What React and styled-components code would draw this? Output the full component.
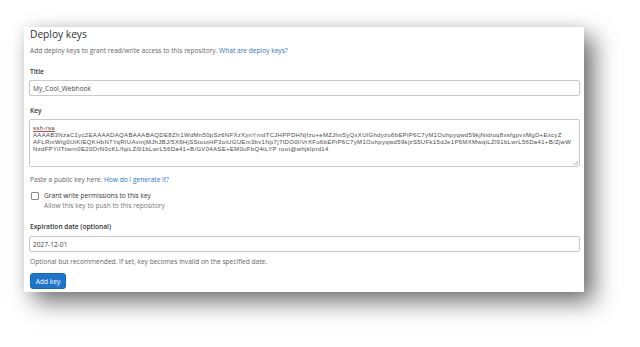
import React from 'react'
import styled, { createGlobalStyle } from 'styled-components'

const GlobalStyle = createGlobalStyle`
  html, body {
    margin: 0;
    padding: 0;
    background: #fff;
  }
  body {
    font-family: "Open Sans", "Noto Sans", sans-serif;
    color: #333;
  }
`

const Page = styled.div`
  width: 640px;
  height: 347px;
  box-sizing: border-box;
  padding: 27px 0 0 24px;
  overflow: hidden;
`

const Card = styled.section`
  width: 560px;
  box-sizing: border-box;
  background: #fff;
  padding: 1px 4px 3px 5px;
  box-shadow: 10px 10px 22px rgba(0, 0, 0, 0.55), 0 0 12px rgba(0, 0, 0, 0.08);
`

const Heading = styled.h2`
  margin: 0 0 0 1px;
  font-size: 10.2px;
  font-weight: 400;
  line-height: 12px;
  color: #303030;
`

const Help = styled.p`
  margin: ${p => p.$top || 0}px 0 0 1px;
  font-size: 6.6px;
  line-height: 9px;
  color: #666;
`

const A = styled.a`
  color: #1f75cb;
  text-decoration: none;
`

const Label = styled.label`
  display: block;
  margin: ${p => p.$top}px 0 ${p => p.$bottom || 4}px 1px;
  font-size: 6.6px;
  font-weight: 600;
  line-height: 9px;
  color: #333;
`

const Input = styled.input`
  display: block;
  width: 551px;
  height: 16px;
  box-sizing: border-box;
  border: 1px solid #c9c9c9;
  border-radius: 2px;
  padding: 0 3px;
  font-family: inherit;
  font-size: 6.6px;
  color: #444;
  background: #fff;
  outline: none;
`

const KeyBox = styled.div`
  position: relative;
  width: 551px;
  height: 48px;
  box-sizing: border-box;
  border: 1px solid #c9c9c9;
  border-radius: 2px;
  padding: 5px 3px 0 3px;
  font-family: "Liberation Sans", Arial, sans-serif;
  font-size: 6px;
  letter-spacing: 0.32px;
  line-height: 7px;
  color: #4a4a4a;
  white-space: pre;
  overflow: hidden;
`

const KeyLine = styled.div`
  height: 7px;
`

const Misspelled = styled.span`
  text-decoration: underline solid #d94040;
  text-decoration-thickness: 0.6px;
  text-underline-offset: 0.6px;
`

const Grip = styled.svg`
  position: absolute;
  right: 1px;
  bottom: 1px;
`

const CheckRow = styled.div`
  display: flex;
  align-items: flex-start;
  gap: 5px;
  margin: 7px 0 0 2px;
`

const Box = styled.span`
  flex: none;
  width: 6px;
  height: 6px;
  margin-top: 1px;
  border: 1px solid #8c8c8c;
  border-radius: 1px;
  background: #fff;
`

const CheckText = styled.div`
  font-size: 6.6px;
  line-height: 9px;
  color: #333;
`

const SubText = styled.div`
  color: #777;
  margin-top: 1px;
`

const Button = styled.button`
  display: block;
  margin: 7px 0 0 1px;
  width: 36px;
  height: 16px;
  padding: 0;
  border: 1px solid #1068bf;
  border-radius: 3px;
  background: #1f75cb;
  color: #fff;
  font-family: inherit;
  font-size: 6.6px;
`

const key = [
  'AAAAB3NzaC1yc2EAAAADAQABAAABAQDE8Zfr1WdMn50pSz6NFXzXjmYmdTCJHPPDHNjfzu+eMZJlm5yQxXUlGhdyzu6bEPiP6C7yM1Ouhpyqwd59kjNidiuq8xsfgpvxMgD+ExcyZ',
  'AFLRmWlg0UiKIEQKHbN7YqRIUAvmjMJhJBJ/5X6HjSStootHP3oiUGUEm3bv1Np7j7tDO0l/VrXFu6bEPiP6C7yM1Ouhpyqwd59kjzS5UFk15dJe1P6MXMwqiLZl91bLwrL56Da41+B/ZjwW',
  'NzdFPYiITtwrn0E20OrN0cKL/fqiLZl91bLwrL56Da41+B/GV04ASE+EM0uFbQ4tLYP root@whjklprd14',
]

export default function App() {
  return (
    <Page>
      <GlobalStyle />
      <Card>
        <Heading>Deploy keys</Heading>
        <Help $top={6}>
          Add deploy keys to grant read/write access to this repository. <A href="#">What are deploy keys?</A>
        </Help>

        <Label $top={12}>Title</Label>
        <Input defaultValue="My_Cool_Webhook" />

        <Label $top={10}>Key</Label>
        <KeyBox>
          <KeyLine><Misspelled>ssh-rsa</Misspelled></KeyLine>
          {key.map(line => <KeyLine key={line}>{line}</KeyLine>)}
          <Grip width="5" height="5" viewBox="0 0 5 5">
            <path d="M5 1 L1 5 M5 3 L3 5" stroke="#999" strokeWidth="0.7" />
          </Grip>
        </KeyBox>

        <Help $top={8}>
          Paste a public key here. <A href="#">How do I generate it?</A>
        </Help>

        <CheckRow>
          <Box />
          <CheckText>
            Grant write permissions to this key
            <SubText>Allow this key to push to this repository</SubText>
          </CheckText>
        </CheckRow>

        <Label $top={12} $bottom={5}>Expiration date (optional)</Label>
        <Input defaultValue="2027-12-01" />
        <Help $top={5}>Optional but recommended. If set, key becomes invalid on the specified date.</Help>

        <Button>Add key</Button>
      </Card>
    </Page>
  )
}
